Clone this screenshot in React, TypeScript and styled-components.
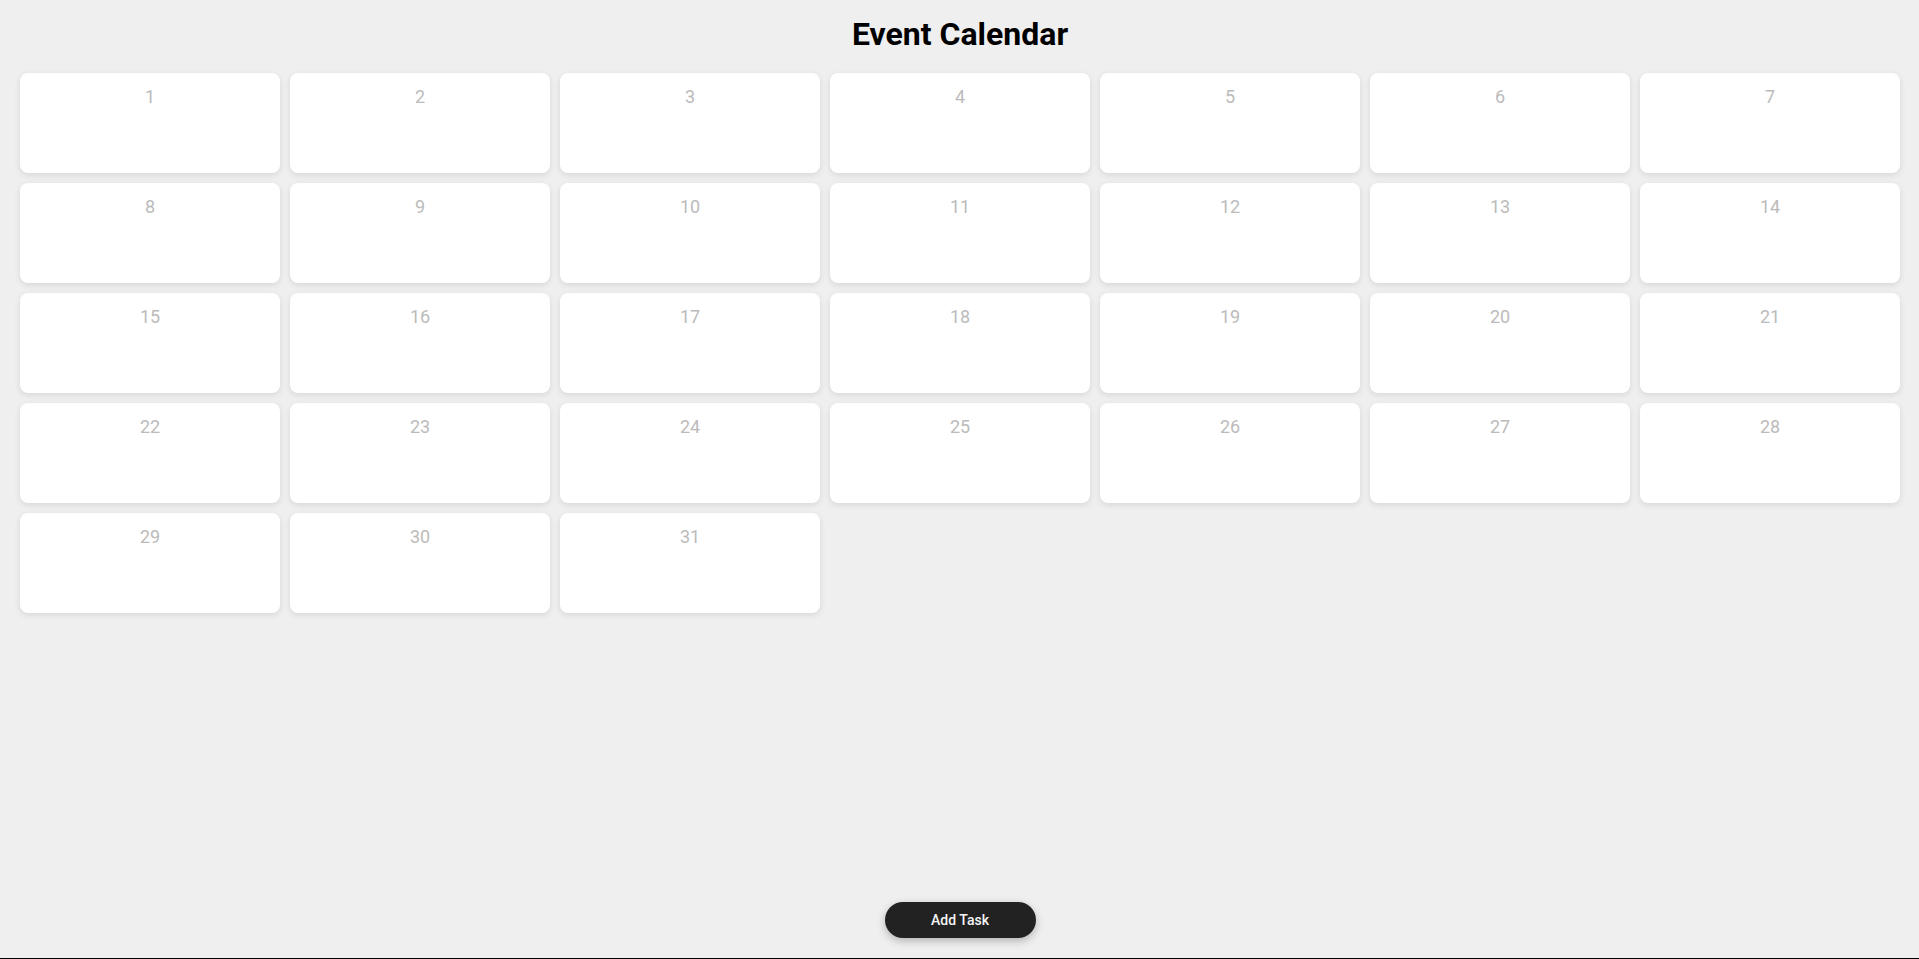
import { FC } from "react";
import styled, { createGlobalStyle } from "styled-components";

const GlobalStyle = createGlobalStyle`
* {
    box-sizing: border-box;
}

body {
    margin: 0;
    background-color: #efefef;
    font-family: Roboto, "Liberation Sans", sans-serif;
}
`;

const days = Array.from({ length: 31 }, (_, i) => i + 1);

const DayCard: FC<{ day: number }> = ({ day }) => (
    <Card>
        <DayNumber>{day}</DayNumber>
    </Card>
);

export default function App() {
    return (
        <>
            <GlobalStyle />
            <Page>
                <Title>Event Calendar</Title>
                <Grid>
                    {days.map((day) => (
                        <DayCard key={day} day={day} />
                    ))}
                </Grid>
                <Footer>
                    <AddButton type="button">Add Task</AddButton>
                </Footer>
            </Page>
        </>
    );
}

const Page = styled.div`
min-height: 100vh;
display: flex;
flex-direction: column;
padding: 0 19px 0 20px;
border-bottom: 1px solid #000;
`;

const Title = styled.h1`
margin: 16px 0 20px;
text-align: center;
font-size: 32px;
font-weight: 700;
line-height: 37px;
color: #000;
`;

const Grid = styled.div`
display: grid;
grid-template-columns: repeat(7, 260px);
grid-auto-rows: 100px;
gap: 10px;
`;

const Card = styled.div`
background-color: #fff;
border-radius: 8px;
box-shadow: 0 2px 6px rgba(0, 0, 0, 0.1);
padding-top: 13px;
text-align: center;
`;

const DayNumber = styled.span`
font-size: 18px;
color: #bbb;
`;

const Footer = styled.div`
margin-top: auto;
display: flex;
justify-content: center;
padding-bottom: 20px;
`;

const AddButton = styled.button`
width: 151px;
height: 36px;
border: none;
border-radius: 18px;
background-color: #222;
color: #f5f5f5;
font-family: Roboto, "Liberation Sans", sans-serif;
font-size: 14px;
font-weight: 500;
box-shadow: 0 3px 8px rgba(0, 0, 0, 0.25);
cursor: pointer;
`;
